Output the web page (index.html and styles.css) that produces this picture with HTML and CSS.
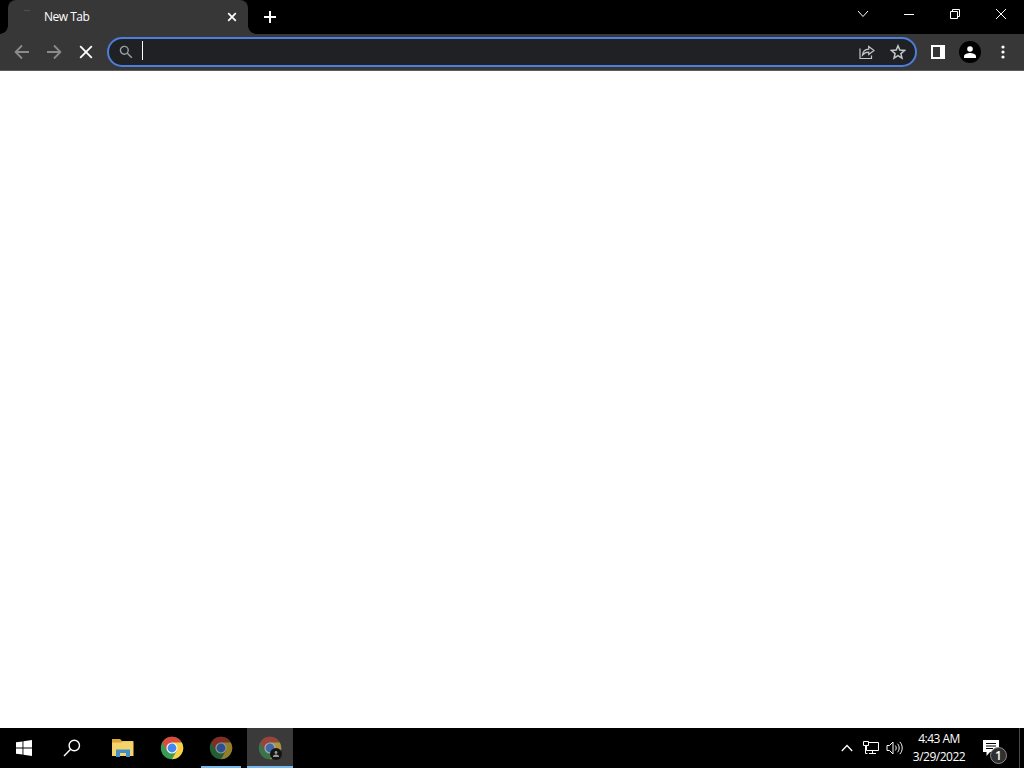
FILE: index.html
```html
<!DOCTYPE html>
<html lang="en">
<head>
    <meta charset="UTF-8">
    <meta name="viewport" content="width=device-width, initial-scale=1.0">
    <title>New Tab</title>
    <link rel="stylesheet" href="styles.css">
</head>
<body>
    <!-- Shared Chrome logo -->
    <svg class="defs" width="0" height="0">
        <symbol id="chrome-logo" viewBox="0 0 24 24">
            <circle cx="12" cy="12" r="11.2" fill="#3a9b55"/>
            <path d="M12 12 L2.3 6.4 A11.2 11.2 0 0 1 21.7 6.4 L12 6.4 Z" fill="#dc4a3d"/>
            <path d="M12 6.4 H21.7 A11.2 11.2 0 0 1 12 23.2 L16.85 14.8 Z" fill="#fbd044"/>
            <path d="M2.3 6.4 L7.15 14.8 L12 12 L12 6.4 Z" fill="#dc4a3d"/>
            <circle cx="12" cy="12" r="5.6" fill="#f4f6f4"/>
            <circle cx="12" cy="12" r="4.4" fill="#4687ee"/>
        </symbol>
    </svg>

    <div class="tab-strip">
        <div class="tab">
            <span class="spinner"></span>
            <span class="tab-title">New Tab</span>
            <svg class="tab-close" width="16" height="16" viewBox="0 0 16 16"><path d="M4.2 4.2l7.6 7.6M11.8 4.2l-7.6 7.6"/></svg>
        </div>
        <div class="new-tab">
            <svg width="14" height="14" viewBox="0 0 14 14"><path d="M7 1v12M1 7h12"/></svg>
        </div>
        <div class="window-buttons">
            <div class="window-button"><svg width="12" height="12" viewBox="0 0 12 12"><path d="M1 3l5 5.5L11 3"/></svg></div>
            <div class="window-button"><svg width="12" height="12" viewBox="0 0 12 12"><path d="M1 6.5h10"/></svg></div>
            <div class="window-button"><svg width="12" height="12" viewBox="0 0 12 12"><path d="M1.500 3.500h7v7h-7zM3.500 3.500v-2h7v7h-2"/></svg></div>
            <div class="window-button"><svg width="12" height="12" viewBox="0 0 12 12"><path d="M1 1l10 10M11 1L1 11"/></svg></div>
        </div>
    </div>

    <div class="toolbar">
        <div class="tool dim"><svg width="16" height="16" viewBox="0 0 16 16"><path d="M15 8H2M8 1.5L1.6 8 8 14.5"/></svg></div>
        <div class="tool dim"><svg width="16" height="16" viewBox="0 0 16 16"><path d="M1 8h13M8 1.5L14.4 8 8 14.5"/></svg></div>
        <div class="tool"><svg width="16" height="16" viewBox="0 0 16 16"><path d="M2.2 2.2l11.6 11.6M13.8 2.2L2.2 13.8"/></svg></div>
        <div class="omnibox">
            <svg class="search-icon" width="14" height="14" viewBox="0 0 14 14"><circle cx="5.3" cy="5.3" r="3.9"/><path d="M8.3 8.3l4.5 4.5"/></svg>
            <span class="caret"></span>
            <svg class="share-icon" width="16" height="16" viewBox="0 0 16 16"><path d="M1 4.5v10h11.5v-3M3.500 11c.4-3.800 2.400-5.600 6.200-5.800V2.500L15 6.600l-5.300 4V8.200C7 8.200 5 9.200 3.500 11z"/></svg>
            <svg class="star-icon" width="16" height="16" viewBox="0 0 16 16"><path d="M8 1.800l1.800 4.300 4.700.4-3.600 3.100 1.100 4.600L8 11.700l-4 2.500 1.100-4.600-3.600-3.100 4.700-.4z"/></svg>
        </div>
        <div class="tool"><svg class="solid" width="14" height="14" viewBox="0 0 14 14"><path fill-rule="evenodd" d="M0 0h14v14H0zM2 2v10h7V2z"/></svg></div>
        <div class="tool"><span class="avatar"><svg class="solid" width="12" height="12" viewBox="0 0 12 12"><circle cx="6" cy="3" r="2.8"/><path d="M0 12v-1.7C0 8 4 7 6 7s6 1 6 3.300V12z"/></svg></span></div>
        <div class="tool menu"><svg class="solid" width="4" height="14" viewBox="0 0 4 14"><circle cx="2" cy="2" r="1.6"/><circle cx="2" cy="7" r="1.6"/><circle cx="2" cy="12" r="1.6"/></svg></div>
    </div>

    <div class="page"></div>

    <div class="taskbar">
        <div class="start"><svg class="solid" width="16" height="16" viewBox="0 0 16 16"><path d="M0 2.3L6.500 1.400V7.600H0zM7.400 1.200L16 0V7.600H7.400zM0 8.400H6.500V14.600L0 13.700zM7.400 8.400H16V16L7.400 14.800z"/></svg></div>
        <div class="start"><svg class="task-search" width="18" height="18" viewBox="0 0 18 18"><circle cx="11.300" cy="6.500" r="5.200"/><path d="M7.600 10.200L1 17"/></svg></div>
        <div class="apps">
            <div class="app">
                <svg width="22" height="18" viewBox="0 0 22 18">
                    <path d="M0 0h8l2 2h11v15H0z" fill="#d9a63c"/>
                    <path d="M0 3.5h9.500l1.500-1.200h10.500V17H0z" fill="#f6d26b"/>
                    <path d="M4 18v-7.500h14V18h-4v-4H8v4z" fill="#3f8fca"/>
                </svg>
            </div>
            <div class="app"><svg width="24" height="24"><use href="#chrome-logo"/></svg></div>
            <div class="app running"><svg class="faded" width="24" height="24"><use href="#chrome-logo"/></svg></div>
            <div class="app active">
                <svg class="faded" width="24" height="24"><use href="#chrome-logo"/></svg>
                <span class="profile-badge"><svg width="6" height="6" viewBox="0 0 12 12"><circle cx="6" cy="3" r="2.8"/><path d="M0 12v-1.700C0 8 4 7 6 7s6 1 6 3.300V12z"/></svg></span>
            </div>
        </div>
        <div class="tray">
            <div class="tray-icon"><svg width="12" height="8" viewBox="0 0 12 8"><path d="M.8 7L6 1.500 11.200 7"/></svg></div>
            <div class="tray-icon"><svg class="network" width="17" height="16" viewBox="0 0 17 16"><path d="M5.500 2.500h10v8h-12V6M9.500 10.500v3M6 13.500h7M.5 1.500h5v4h-5zM2.500 5.500v8h2"/></svg></div>
            <div class="tray-icon"><svg class="sound" width="18" height="16" viewBox="0 0 18 16"><path d="M1 5.500h2.500L7 2v12L3.500 10.500H1zM9.300 5.500c1.200 1.500 1.200 3.500 0 5M11.500 3.700c2.200 2.500 2.200 6.100 0 8.600M13.800 1.900c3.200 3.500 3.200 8.700 0 12.200"/></svg></div>
            <div class="clock">
                <span>4:43 AM</span>
                <span>3/29/2022</span>
            </div>
            <div class="notifications">
                <svg class="solid" width="16" height="16" viewBox="0 0 16 16"><path fill-rule="evenodd" d="M0 0h16v12H7l-3.500 4v-4H0zM3 3v1h10V3zM3 5.500v1h10v-1zM3 8v1h7V8z"/></svg>
                <span class="count">1</span>
            </div>
            <div class="show-desktop"></div>
        </div>
    </div>
</body>
</html>
```
FILE: styles.css
```css
* {
    box-sizing: border-box;
}
body {
    margin: 0;
    height: 768px;
    display: flex;
    flex-direction: column;
    overflow: hidden;
    background-color: #fff;
    color: #fff;
    font-family: "Open Sans", "Noto Sans", sans-serif;
    font-size: 12px;
}
svg {
    display: block;
    fill: none;
    stroke: #fff;
}
symbol {
    stroke: none;
}
.defs {
    display: none;
}
.solid {
    fill: #fff;
    stroke: none;
}

/* Tabs */
.tab-strip {
    display: flex;
    height: 34px;
    padding-left: 8px;
    background-color: #000;
}
.tab {
    position: relative;
    display: flex;
    align-items: center;
    width: 240px;
    padding: 0 8px 0 14px;
    border-radius: 8px 8px 0 0;
    background-color: #373737;
}
.tab::before,
.tab::after {
    content: "";
    position: absolute;
    bottom: 0;
    width: 8px;
    height: 8px;
}
.tab::before {
    left: -8px;
    background: radial-gradient(circle at 0 0, transparent 7.5px, #373737 8px);
}
.tab::after {
    right: -8px;
    background: radial-gradient(circle at 100% 0, transparent 7.5px, #373737 8px);
}
.spinner {
    width: 6px;
    height: 1px;
    margin: -13px 16px 0 2px;
    background-color: #46505e;
}
.tab-title {
    flex: 1;
    margin-left: -2px;
    padding-bottom: 2px;
    letter-spacing: -0.5px;
}
.tab-close {
    stroke-width: 1.7;
}
.new-tab {
    display: flex;
    align-items: center;
    margin-left: 15px;
}
.new-tab svg {
    stroke-width: 2;
}
.window-buttons {
    display: flex;
    margin-left: auto;
}
.window-button {
    display: flex;
    align-items: center;
    justify-content: center;
    width: 46px;
    height: 28px;
}

/* Toolbar */
.toolbar {
    display: flex;
    align-items: center;
    height: 37px;
    padding: 0 6px;
    border-bottom: 1px solid #5c5c5c;
    background-color: #373737;
}
.tool {
    display: flex;
    align-items: center;
    justify-content: center;
    width: 32px;
}
.tool svg {
    stroke-width: 1.8;
}
.dim svg {
    stroke: #8b8b8b;
}
.menu {
    padding-left: 1px;
}
.omnibox {
    display: flex;
    flex: 1;
    align-items: center;
    height: 30px;
    margin: 0 5px;
    padding: 0 9px 0 10px;
    border: 2px solid #4c7fdc;
    border-radius: 15px;
    background-color: #202124;
}
.omnibox svg {
    stroke: #c4c7ca;
    stroke-width: 1.2;
}
.omnibox .search-icon {
    stroke: #9aa0a6;
    stroke-width: 1.4;
}
.caret {
    width: 1px;
    height: 19px;
    margin: -3px auto 0 9px;
    background-color: #fff;
}
.share-icon {
    margin-right: 15px;
}
.omnibox .star-icon {
    stroke-width: 1.5;
}
.avatar {
    display: flex;
    align-items: center;
    justify-content: center;
    width: 22px;
    height: 22px;
    border-radius: 50%;
    background-color: #000;
}

.page {
    flex: 1;
    background-color: #fff;
}

/* Taskbar */
.taskbar {
    display: flex;
    height: 40px;
    background-color: #000;
}
.start {
    display: flex;
    align-items: center;
    justify-content: center;
    width: 48px;
}
.task-search {
    stroke-width: 1.4;
}
.apps {
    display: flex;
    gap: 3px;
    margin-left: 4px;
}
.app {
    position: relative;
    display: flex;
    align-items: center;
    justify-content: center;
    width: 46px;
}
.app svg {
    stroke: none;
}
.running::after,
.active::after {
    content: "";
    position: absolute;
    right: 3px;
    bottom: 0;
    left: 3px;
    height: 2px;
    background-color: #76b9ed;
}
.active {
    background-color: #3a3a3a;
}
.active::after {
    right: 0;
    left: 0;
}
.faded {
    opacity: 0.6;
}
.profile-badge {
    position: absolute;
    top: 20px;
    left: 23px;
    display: flex;
    align-items: center;
    justify-content: center;
    width: 12px;
    height: 12px;
    border-radius: 50%;
    background-color: #141414;
}
.profile-badge svg {
    fill: #999;
}
.tray {
    display: flex;
    align-items: center;
    margin-left: auto;
}
.tray-icon {
    display: flex;
    align-items: center;
    justify-content: center;
    width: 24px;
}
.tray-icon svg {
    stroke-width: 1.3;
}
.tray-icon .network,
.tray-icon .sound {
    stroke-width: 1;
}
.clock {
    display: flex;
    flex-direction: column;
    align-items: center;
    width: 64px;
    line-height: 18px;
    letter-spacing: -0.5px;
    white-space: nowrap;
}
.notifications {
    position: relative;
    display: flex;
    width: 48px;
    padding-left: 12px;
}
.count {
    position: absolute;
    top: 7px;
    left: 19px;
    width: 17px;
    height: 17px;
    border: 1px solid #8a8a8a;
    border-radius: 50%;
    background-color: #303030;
    font-size: 12px;
    font-weight: 600;
    line-height: 15px;
    text-align: center;
}
.show-desktop {
    width: 5px;
    height: 40px;
    border-left: 1px solid #4a4a4a;
}
```
